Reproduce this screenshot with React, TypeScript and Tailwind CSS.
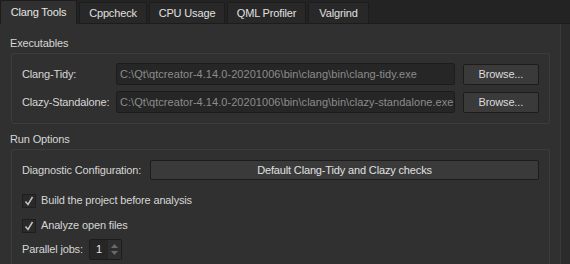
import React from 'react';

const tabs = [
  { t: 'Clang Tools', w: 'w-[77px]' },
  { t: 'Cppcheck', w: 'w-[68px]' },
  { t: 'CPU Usage', w: 'w-[76px]' },
  { t: 'QML Profiler', w: 'w-[79px]' },
  { t: 'Valgrind', w: 'w-[61px]' },
];

function Check({ label }: { label: string }) {
  return (
    <div className="flex h-[25px] items-center gap-[5px]">
      <span className="flex h-[14px] w-[14px] items-center justify-center border border-[#1e1e1e] bg-[#2a2a2a]">
        <svg width="10" height="10" viewBox="0 0 10 10">
          <path d="M1.5 5.5 L4 8.5 L8.5 1" fill="none" stroke="#c4c4c4" strokeWidth="1.5" />
        </svg>
      </span>
      <span>{label}</span>
    </div>
  );
}

function PathRow({ label, value }: { label: string; value: string }) {
  return (
    <div className="flex h-[22px] items-center">
      <span className="w-[94px] shrink-0">{label}</span>
      <div className="flex h-[22px] w-[346px] items-center overflow-hidden rounded-[2px] border border-[#1c1c1c] bg-[#262626] px-[3px] tracking-[0.05px] text-[#8c8c8c]">
        {value}
      </div>
      <button className="ml-[8px] h-[21px] w-[78px] rounded-[2px] border border-[#1c1c1c] bg-[#3a3a3a] text-[#dcdcdc]">
        Browse...
      </button>
    </div>
  );
}

export default function App() {
  return (
    <div className="h-[264px] w-[570px] overflow-hidden whitespace-nowrap bg-[#232323] font-['Liberation_Sans',Arial,sans-serif] text-[11px] tracking-[-0.15px] text-[#d6d6d6]">
      {/* tabs */}
      <div className="flex h-[23px] items-end gap-[2px]">
        {tabs.map(({ t, w }, i) =>
          i === 0 ? (
            <div key={t} className={`-mb-px flex h-[24px] items-center justify-center rounded-t-[2px] border border-b-0 border-[#1c1c1c] bg-[#303030] text-[#e6e6e6] ${w}`}>
              {t}
            </div>
          ) : (
            <div key={t} className={`flex h-[21px] items-center justify-center rounded-t-[2px] border border-b-0 border-[#1c1c1c] bg-[#282828] text-[#e0e0e0] ${w}`}>
              {t}
            </div>
          ),
        )}
      </div>

      {/* panel */}
      <div className="flex h-[241px] border-t border-[#1c1c1c] bg-[#303030]">
        <div className="w-[560px] shrink-0 px-[10px] pt-[11px]">
          <div className="h-[18px]">Executables</div>
          <div className="ml-px flex flex-col gap-[6px] rounded-[2px] border border-[#3c3c3c] px-[10px] pb-[10px] pt-[9px]">
            <PathRow label="Clang-Tidy:" value="C:\Qt\qtcreator-4.14.0-20201006\bin\clang\bin\clang-tidy.exe" />
            <PathRow label="Clazy-Standalone:" value="C:\Qt\qtcreator-4.14.0-20201006\bin\clang\bin\clazy-standalone.exe" />
          </div>

          <div className="mt-[7px] h-[18px]">Run Options</div>
          <div className="ml-px h-[120px] rounded-[2px] border border-[#3c3c3c] px-[10px] pt-[10px]">
            <div className="flex h-[20px] items-center">
              <span className="w-[128px] shrink-0">Diagnostic Configuration:</span>
              <button className="h-[20px] w-[397px] rounded-[2px] border border-[#1c1c1c] bg-[#3a3a3a] text-[#e0e0e0]">
                Default Clang-Tidy and Clazy checks
              </button>
            </div>
            <div className="mt-[8px]">
              <Check label="Build the project before analysis" />
              <Check label="Analyze open files" />
            </div>
            <div className="mt-[1px] flex h-[21px] items-center">
              <span className="w-[67px] shrink-0">Parallel jobs:</span>
              <div className="flex h-[21px] w-[33px] rounded-[2px] border border-[#1c1c1c] bg-[#262626]">
                <span className="flex w-[18px] items-center justify-center text-[#e6e6e6]">1</span>
                <span className="flex flex-1 flex-col items-center justify-center gap-[3px] bg-[#2e2e2e]">
                  <svg width="7" height="4" viewBox="0 0 7 4"><path d="M0 4 L3.5 0 L7 4 Z" fill="#6a6a6a" /></svg>
                  <svg width="7" height="4" viewBox="0 0 7 4"><path d="M0 0 L3.5 4 L7 0 Z" fill="#6a6a6a" /></svg>
                </span>
              </div>
            </div>
          </div>
        </div>
        <div className="flex-1 border-l border-[#3a3a3a] bg-[#2b2b2b]" />
      </div>
    </div>
  );
}
